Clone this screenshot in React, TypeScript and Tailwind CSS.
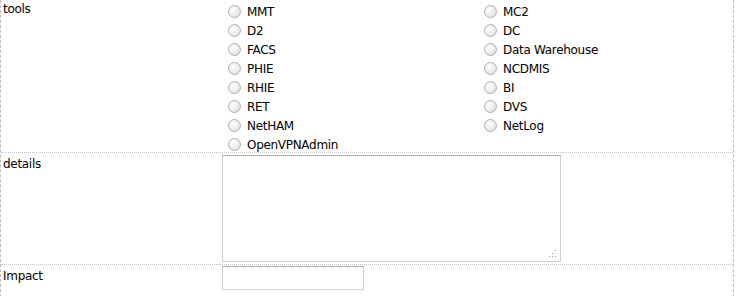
import React from 'react';

const col1 = ['MMT', 'D2', 'FACS', 'PHIE', 'RHIE', 'RET', 'NetHAM', 'OpenVPNAdmin'];
const col2 = ['MC2', 'DC', 'Data Warehouse', 'NCDMIS', 'BI', 'DVS', 'NetLog'];

const Radio: React.FC<{ label: string }> = ({ label }) => (
  <label className="flex items-center h-[19px] gap-[6px] whitespace-nowrap">
    <span className="w-[13px] h-[13px] rounded-full border border-[#b0b0b0] bg-[radial-gradient(circle_at_35%_35%,#ffffff_0%,#ebebeb_55%,#d6d6d6_100%)] shrink-0" />
    <span>{label}</span>
  </label>
);

const App: React.FC = () => {
  return (
    <div className="w-[736px] h-[296px] bg-white text-black text-[12px] tracking-[-0.3px] font-['DejaVu_Sans',Verdana,sans-serif] overflow-hidden">
      <div className="w-[734px] border-x border-dashed border-[#bdbdbd]">
        {/* tools */}
        <div className="grid grid-cols-[221px_1fr] h-[153px] border-b border-dotted border-[#c4c4c4]">
          <div className="px-[2px] pt-[1px] leading-[16px]">tools</div>
          <div className="grid grid-cols-[256px_256px] pl-[6px] pt-[2px]">
            <div className="flex flex-col">
              {col1.map((t) => (
                <Radio key={t} label={t} />
              ))}
            </div>
            <div className="flex flex-col">
              {col2.map((t) => (
                <Radio key={t} label={t} />
              ))}
            </div>
          </div>
        </div>

        {/* details */}
        <div className="grid grid-cols-[221px_1fr] h-[112px] border-b border-dotted border-[#c4c4c4]">
          <div className="px-[2px] pt-[3px] leading-[16px]">details</div>
          <div className="pt-[2px]">
            <div className="relative w-[339px] h-[107px] border border-[#cfcfcf] border-t-[#ababab] bg-white">
              <svg className="absolute right-[3px] bottom-[3px]" width="8" height="8" viewBox="0 0 8 8">
                <rect x="6" y="0" width="1" height="1" fill="#9a9a9a" />
                <rect x="6" y="3" width="1" height="1" fill="#9a9a9a" />
                <rect x="3" y="3" width="1" height="1" fill="#9a9a9a" />
                <rect x="6" y="6" width="1" height="1" fill="#9a9a9a" />
                <rect x="3" y="6" width="1" height="1" fill="#9a9a9a" />
                <rect x="0" y="6" width="1" height="1" fill="#9a9a9a" />
              </svg>
            </div>
          </div>
        </div>

        {/* impact */}
        <div className="grid grid-cols-[221px_1fr] h-[32px]">
          <div className="px-[2px] pt-[3px] leading-[16px]">Impact</div>
          <div className="pt-[1px]">
            <div className="w-[142px] h-[24px] border border-[#d0d0d0] border-t-[#ababab] bg-white" />
          </div>
        </div>
      </div>
    </div>
  );
};

export default App;
